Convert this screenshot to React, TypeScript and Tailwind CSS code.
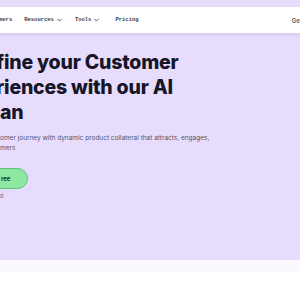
import React from "react";

function Chevron() {
  return (
    <svg width="5" height="4" viewBox="0 0 10 6" className="ml-[3px]" fill="none">
      <path d="M1 1l4 4 4-4" stroke="#3b3b4a" strokeWidth="1.6" strokeLinecap="round" strokeLinejoin="round" />
    </svg>
  );
}

function Header() {
  return (
    <div className="h-[26px] bg-white shadow-[0_2px_3px_rgba(80,60,140,0.12)] flex items-center justify-between font-['Liberation_Mono',monospace] text-[5.5px] font-bold text-[#3b3b4a]">
      <div className="flex items-center">
        <span className="-ml-[1px]">mers</span>
        <span className="ml-[12px] flex items-center">
          Resources
          <Chevron />
        </span>
        <span className="ml-[13px] flex items-center">
          Tools
          <Chevron />
        </span>
        <span className="ml-[16px]">Pricing</span>
      </div>
      <span className="-mr-[2px] font-['Inter',sans-serif] text-[6px] font-semibold text-[#555]">Get</span>
    </div>
  );
}

export default function App() {
  return (
    <div className="w-[300px] h-[300px] overflow-hidden bg-white font-['Inter',sans-serif]">
      <div className="h-[260px] bg-[#e8dcfc] pt-[7px]">
        <Header />
        <div className="mt-[17px] overflow-hidden">
          <h1 className="text-[19.5px] leading-[25px] font-extrabold tracking-[-0.2px] text-[#161629] whitespace-nowrap">
            <div className="-ml-[4px]">fine your Customer</div>
            <div className="-ml-[4px]">riences with our AI</div>
            <div>an</div>
          </h1>
          <p className="mt-[8px] text-[6.5px] leading-[10px] text-[#54546a] whitespace-nowrap">
            <span className="block">omer journey with dynamic product collateral that attracts, engages,</span>
            <span className="block">mers</span>
          </p>
          <div className="mt-[15px] flex">
            <button
              type="button"
              className="-ml-[12px] h-[21px] pl-[12px] pr-[17px] rounded-full bg-[#8fe8a2] border border-[#5fbf7c] text-[6px] font-bold text-[#14361f]"
            >
              ree
            </button>
          </div>
          <div className="mt-[3px] text-[5.5px] text-[#6b6b80]">d</div>
        </div>
      </div>
      <div className="h-[12px] bg-[#fbf9ff]" />
    </div>
  );
}
